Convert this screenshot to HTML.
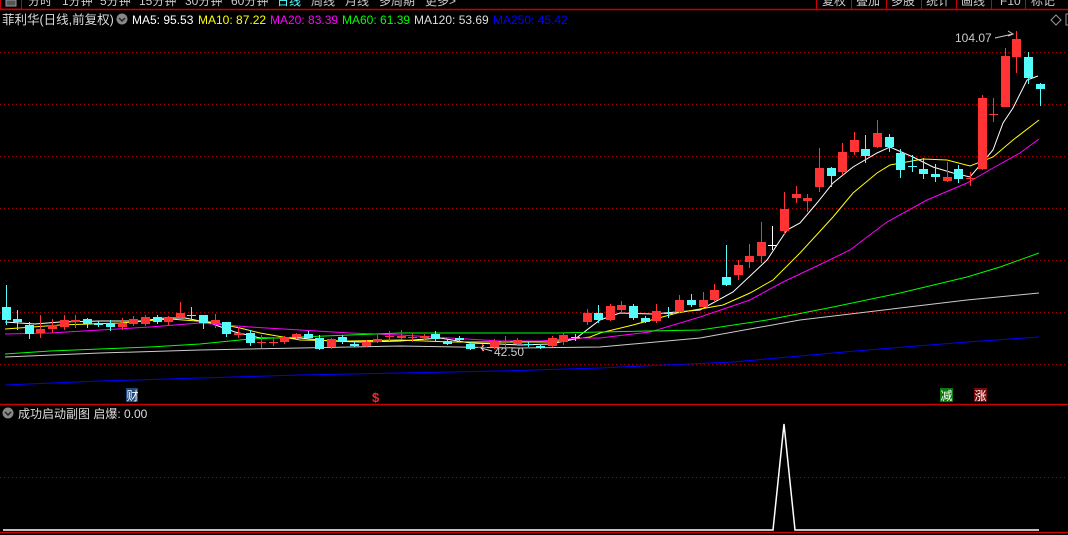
<!DOCTYPE html>
<html><head><meta charset="utf-8">
<style>
html,body{margin:0;padding:0;background:#000;width:1068px;height:535px;overflow:hidden;}
body{position:relative;font-family:"Liberation Sans","Noto Sans CJK SC",sans-serif;}
</style></head><body>
<svg id="s" width="1068" height="535" style="position:absolute;left:0;top:0" xmlns="http://www.w3.org/2000/svg" font-family="Liberation Sans, Noto Sans CJK SC, sans-serif">
<rect x="0.5" y="-2" width="21" height="11" fill="none" stroke="#c00" stroke-width="1"/>
<rect x="6" y="0" width="10" height="6" fill="#555" stroke="#999" stroke-width="1"/>
<line x1="0" y1="9.5" x2="1068" y2="9.5" stroke="#c00" stroke-width="1.5"/>
<g fill="#ccc" font-size="12">
<text x="28" y="5">分时</text><text x="62" y="5">1分钟</text><text x="100" y="5">5分钟</text><text x="139" y="5">15分钟</text><text x="185" y="5">30分钟</text><text x="231" y="5">60分钟</text>
<text x="277" y="5" fill="#5ff">日线</text><text x="311" y="5">周线</text><text x="345" y="5">月线</text><text x="379" y="5">多周期</text><text x="425" y="5">更多&gt;</text>
<text x="822" y="5">复权</text><text x="856" y="5">叠加</text><text x="891" y="5">多股</text><text x="926" y="5">统计</text><text x="961" y="5">画线</text><text x="1000" y="5">F10</text><text x="1031" y="5">标记</text>
</g>
<g stroke="#c00" stroke-width="1">
<line x1="816.5" y1="0" x2="816.5" y2="9"/><line x1="851.5" y1="0" x2="851.5" y2="9"/><line x1="886.5" y1="0" x2="886.5" y2="9"/><line x1="921.5" y1="0" x2="921.5" y2="9"/><line x1="956.5" y1="0" x2="956.5" y2="9"/><line x1="991.5" y1="0" x2="991.5" y2="9"/><line x1="1025.5" y1="0" x2="1025.5" y2="9"/>
</g>
<text x="2" y="24" fill="#ddd" font-size="12.5">菲利华(日线,前复权)</text>
<circle cx="122" cy="19" r="5.5" fill="#888"/><path d="M119 18l3 3 3-3" stroke="#222" stroke-width="1.5" fill="none"/>
<g font-size="12">
<text x="132" y="24" fill="#fff">MA5: 95.53</text>
<text x="198" y="24" fill="#ff0">MA10: 87.22</text>
<text x="270" y="24" fill="#f0f">MA20: 83.39</text>
<text x="342" y="24" fill="#0f0">MA60: 61.39</text>
<text x="414" y="24" fill="#ddd">MA120: 53.69</text>
<text x="493" y="24" fill="#00f">MA250: 45.42</text>
</g>
<path d="M1056 15l5 5-5 5-5-5z" fill="none" stroke="#999" stroke-width="1"/>
<rect x="1066" y="14" width="4" height="11" fill="none" stroke="#999"/>
<g id="grid" stroke="#a00" stroke-width="1" stroke-dasharray="1,3"></g>
<g id="ma" fill="none" stroke-width="1"></g>
<g id="c"></g>
<text x="955" y="42" fill="#ccc" font-size="12">104.07</text>
<path d="M995 38 L1013 34 M1008 31 l5 3 -5 2" stroke="#ccc" fill="none" stroke-width="1"/>
<text x="494" y="356" fill="#ccc" font-size="12">42.50</text>
<path d="M492 351 L481 348 M484 345 l-3 3 3 3" stroke="#ccc" fill="none" stroke-width="1"/>
<rect x="126" y="388" width="12" height="14" fill="#1c4a80"/><text x="126.5" y="400" fill="#fff" font-size="12">财</text>
<text x="372" y="402" fill="#f22" font-size="13" font-weight="bold">$</text>
<rect x="940" y="388" width="13" height="14" fill="#0a7a0a"/><text x="940.5" y="400" fill="#fff" font-size="12">减</text>
<rect x="974" y="388" width="13" height="14" fill="#7a0a0a"/><text x="974.5" y="400" fill="#fff" font-size="12">涨</text>
<line x1="0" y1="404.5" x2="1068" y2="404.5" stroke="#c00" stroke-width="1.5"/>
<circle cx="8" cy="413" r="5.5" fill="#888"/><path d="M5 412l3 3 3-3" stroke="#222" stroke-width="1.5" fill="none"/>
<text x="18" y="418" fill="#ddd" font-size="12">成功启动副图 启爆: 0.00</text>
<line x1="0" y1="477.5" x2="1068" y2="477.5" stroke="#a00" stroke-width="1" stroke-dasharray="1,3"/>
<polyline points="3,530 773,530 784,424 795,530 1039,530" stroke="#fff" stroke-width="1.5" fill="none"/>
<line x1="0" y1="532.5" x2="1068" y2="532.5" stroke="#c00" stroke-width="1.5"/>
</svg>
<script>
var NS="http://www.w3.org/2000/svg";
function el(p,n,a){var e=document.createElementNS(NS,n);for(var k in a)e.setAttribute(k,a[k]);p.appendChild(e);return e;}
var g=document.getElementById('grid');
[52,104,156,208,260,312,364].forEach(function(y){el(g,'line',{x1:0,y1:y+.5,x2:1068,y2:y+.5});});
var C=[
[307,320,285,325,0],[319,322,310,330,0],[325,334,322,339,0],[329,333,315,338,1],[325,329,319,333,1],
[320,327,315,330,1],[320,322,315,328,1],[319,324,318,328,0],[323,325,321,327,0],[323,327,320,331,0],
[323,327,318,330,1],[319,324,316,326,1],[317,324,315,326,1],[317,322,315,324,0],[318,322,316,325,1],
[313,317,302,318,1],[315,316,307,320,0],[315,323,315,329,0],[320,324,314,328,1],[322,334,322,337,0],
[333,335,327,338,1],[333,343,330,346,0],[342,343,335,348,1],[342,343,337,346,1],[337,342,336,344,1],
[334,337,333,339,1],[334,338,331,339,0],[338,349,335,350,0],[339,347,338,349,1],[337,341,335,344,0],
[344,346,341,347,0],[342,346,340,347,1],[339,342,335,343,1],[336,337,331,341,1],[336,338,330,340,1],
[337,338,333,342,1],[336,338,334,340,1],[334,339,331,342,0],[341,344,339,345,0],[338,340,336,342,0],
[344,349,342,350,0],[347,348,344,351,1],[341,347,339,349,1],[341,342,336,348,1],[340,344,338,346,1],
[344,345,342,347,0],[346,348,344,349,0],[338,346,336,347,1],[335,342,333,345,1],[337,338,334,341,0],
[313,322,309,325,1],[313,320,305,323,0],[306,320,304,321,1],[305,310,301,313,1],[306,318,304,320,0],
[318,322,316,323,0],[311,321,304,323,1],[313,314,307,318,0],[300,312,295,313,1],[300,305,294,307,0],
[300,307,292,308,1],[290,300,284,302,1],[277,285,245,286,0],[265,275,260,280,1],[256,262,244,268,1],
[242,256,222,263,1],[245,246,226,250,2],[209,231,192,234,1],[194,198,186,203,1],[198,201,194,212,1],
[168,187,148,192,1],[168,176,167,187,0],[152,172,143,175,1],[140,152,132,155,1],[149,156,135,163,0],
[133,147,120,148,1],[137,147,134,152,0],[153,170,149,178,0],[166,167,155,172,0],[169,174,158,179,0],
[174,177,164,182,0],[177,181,162,182,1],[169,179,165,183,0],[178,179,172,186,1],[98,169,95,170,1],
[114,115,98,122,1],[56,107,48,107,1],[39,57,31,73,1],[57,78,52,84,0],[84,89,83,106,0]];
var cg=document.getElementById('c');
C.forEach(function(d,i){
 var x=Math.round(5.5+11.62*i)+.5;var col=d[4]==1?'#ff3333':(d[4]==2?'#fff':'#54fcfc');
 el(cg,'line',{x1:x,y1:d[2],x2:x,y2:d[3],stroke:col,'stroke-width':1});
 var h=Math.max(1,d[1]-d[0]);
 el(cg,'rect',{x:x-4.5,y:d[0],width:9,height:h,fill:col});
});
var M={
'#fff':"5,322 35,324 60,322 100,321 140,321 165,318 185,318 210,323 235,332 260,338 300,338 330,341 360,342 400,341 440,338 470,343 500,344 520,345 550,344 575,339 600,320 620,313 653,314 700,310 733,292 767,260 787,230 800,223 817,203 833,183 853,167 877,153 890,147 913,157 933,167 953,173 970,177 993,150 1003,123 1013,108 1027,80 1038,76",
'#ff0':"5,329 60,325 120,323 170,319 210,322 240,328 260,333 300,340 350,341 400,340 450,342 500,342 550,342 590,337 600,333 633,325 677,313 723,305 750,293 773,280 800,253 833,217 853,193 877,173 890,165 923,159 947,160 970,166 993,157 1013,140 1039,120",
'#f0f':"5,334 50,333 100,330 150,327 200,323 250,327 300,330 350,333 400,335 450,338 500,341 540,341 580,338 600,338 650,332 700,317 750,300 783,282 817,266 850,250 887,222 927,200 967,183 993,168 1020,153 1039,139",
'#0f0':"5,354 50,351 100,349 150,347 200,344 250,339 300,337 350,335 400,333 500,333 560,333 600,332 700,330 767,320 833,307 900,293 967,277 1000,267 1039,253",
'#ccc':"5,357 100,353 200,350 300,348 400,346 520,348 600,347 700,338 800,320 900,308 967,300 1039,293",
'#00f':"5,385 100,381 200,378 300,375 400,373 500,371 600,368 733,362 867,350 967,342 1039,337"};
var mg=document.getElementById('ma');
for(var k in M)el(mg,'polyline',{points:M[k],stroke:k});
</script>
</body></html>
